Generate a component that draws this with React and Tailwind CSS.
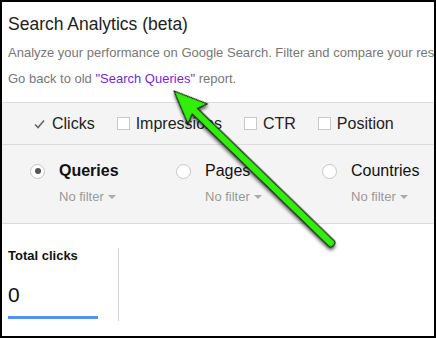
import React from 'react';

const font = { fontFamily: '"Liberation Sans", Arial, sans-serif' };

const Checkbox = ({ label, checked }) => (
  <div className="flex items-center">
    {checked ? (
      <span className="w-[12px] h-[13px] flex items-center justify-center mr-[7px]">
        <svg width="11" height="10" viewBox="0 0 11 10">
          <path d="M1 5.5 L4 8.5 L10 1.5" fill="none" stroke="#666" strokeWidth="1.6" />
        </svg>
      </span>
    ) : (
      <span className="w-[13px] h-[13px] bg-white border border-[#c8c8c8] mr-[6px]"></span>
    )}
    <span className="text-[16px] text-[#222]">{label}</span>
  </div>
);

const Radio = ({ label, selected }) => (
  <div className="flex flex-col">
    <div className="flex items-center">
      <span className="w-[15px] h-[15px] rounded-full bg-white border border-[#c6c6c6] flex items-center justify-center mr-[14px]">
        {selected && <span className="w-[6px] h-[6px] rounded-full bg-[#555]"></span>}
      </span>
      <span className={`text-[16px] text-[#111] ${selected ? 'font-bold' : ''}`}>{label}</span>
    </div>
    <div className="flex items-center pl-[29px] mt-[4px] text-[13px] text-[#999]">
      No filter
      <svg width="8" height="5" viewBox="0 0 8 5" className="ml-[4px] mt-[1px]">
        <path d="M0 0 L8 0 L4 4 Z" fill="#aaa" />
      </svg>
    </div>
  </div>
);

export default function App() {
  return (
    <div className="w-[436px] h-[338px] border-2 border-black bg-white relative overflow-hidden" style={font}>
      {/* header */}
      <div className="px-[6px] pt-[9px]">
        <h1 className="text-[17.5px] leading-[26px] text-[#222] whitespace-nowrap">Search Analytics (beta)</h1>
        <p className="text-[13px] text-[#777] mt-[6px] whitespace-nowrap">
          Analyze your performance on Google Search. Filter and compare your results to better understand your user's search patterns.
        </p>
        <p className="text-[13px] text-[#777] mt-[6px] whitespace-nowrap">
          Go back to old <span className="text-[#7b1fd0]">"Search Queries"</span> report.
        </p>
      </div>

      {/* filter panel */}
      <div className="mt-[14px] bg-[#f4f4f4] border-t border-b border-[#dcdcdc]">
        <div className="h-[42px] flex items-center pl-[31px] gap-[22px] border-b border-[#dcdcdc]">
          <Checkbox label="Clicks" checked />
          <Checkbox label="Impressions" />
          <Checkbox label="CTR" />
          <Checkbox label="Position" />
        </div>
        <div className="h-[78px] flex pl-[28px] pt-[14px]">
          <div className="w-[146px] shrink-0"><Radio label="Queries" selected /></div>
          <div className="w-[146px] shrink-0"><Radio label="Pages" /></div>
          <div className="w-[146px] shrink-0"><Radio label="Countries" /></div>
        </div>
      </div>

      {/* totals */}
      <div className="flex px-[6px] pt-[22px]">
        <div className="w-[90px] flex flex-col">
          <div className="text-[13px] font-bold text-[#111]">Total clicks</div>
          <div className="text-[21px] text-[#111] mt-[17px] leading-[24px]">0</div>
          <div className="h-[3px] bg-[#5591f5] mt-[9px]"></div>
        </div>
        <div className="w-px bg-[#d4d4d4] ml-[20px] mt-[2px] h-[73px]"></div>
      </div>

      {/* annotation arrow */}
      <svg className="absolute left-0 top-0 pointer-events-none" width="436" height="338">
        <defs>
          <filter id="sh" x="-20%" y="-20%" width="140%" height="140%">
            <feDropShadow dx="2" dy="2" stdDeviation="1.5" floodColor="#000" floodOpacity="0.55" />
          </filter>
        </defs>
        <g transform="translate(172 89) rotate(44.1)" filter="url(#sh)">
          <path
            d="M0 0 L33 -14 L29 -3.8 L219 -3.8 Q222 -3.8 222 0 Q222 3.8 219 3.8 L29 3.8 L33 14 Z"
            fill="#33ee11"
            stroke="#111"
            strokeWidth="1.2"
            strokeLinejoin="round"
          />
        </g>
      </svg>
    </div>
  );
}
